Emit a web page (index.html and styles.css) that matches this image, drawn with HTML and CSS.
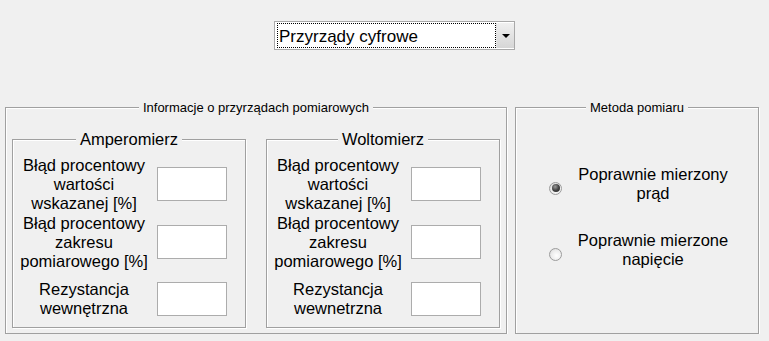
FILE: index.html
```html
<!DOCTYPE html>
<html lang="pl">
<head>
<meta charset="utf-8">
<title>Przyrządy cyfrowe</title>
<link rel="stylesheet" href="styles.css">
</head>
<body>
<div class="page">
  <div class="top">
    <div class="select">
      <div class="sel-value">Przyrządy cyfrowe</div>
      <div class="sel-btn"><span class="arrow"></span></div>
    </div>
  </div>
  <div class="panels">
    <div class="group outer">
      <div class="legend small">Informacje o przyrządach pomiarowych</div>
      <div class="meters">
        <div class="group meter">
          <div class="legend big">Amperomierz</div>
          <div class="rows">
            <div class="row"><div class="label">Błąd procentowy<br>wartości<br>wskazanej [%]</div><div class="edit"></div></div>
            <div class="row"><div class="label">Błąd procentowy<br>zakresu<br>pomiarowego [%]</div><div class="edit"></div></div>
            <div class="row"><div class="label">Rezystancja<br>wewnętrzna</div><div class="edit"></div></div>
          </div>
        </div>
        <div class="group meter">
          <div class="legend big">Woltomierz</div>
          <div class="rows">
            <div class="row"><div class="label">Błąd procentowy<br>wartości<br>wskazanej [%]</div><div class="edit"></div></div>
            <div class="row"><div class="label">Błąd procentowy<br>zakresu<br>pomiarowego [%]</div><div class="edit"></div></div>
            <div class="row"><div class="label">Rezystancja<br>wewnetrzna</div><div class="edit"></div></div>
          </div>
        </div>
      </div>
    </div>
    <div class="group method">
      <div class="legend small">Metoda pomiaru</div>
      <div class="radios">
        <div class="radio-row"><span class="radio on"></span><div class="radio-label">Poprawnie mierzony<br>prąd</div></div>
        <div class="radio-row"><span class="radio"></span><div class="radio-label">Poprawnie mierzone<br>napięcie</div></div>
      </div>
    </div>
  </div>
</div>
</body>
</html>
```
FILE: styles.css
```css
* { box-sizing: border-box; }
body {
  margin: 0;
  background: #f0f0f0;
  font-family: "Liberation Sans", Arial, sans-serif;
  color: #000;
}
.page { padding-top: 21px; }
.top { display: flex; padding-left: 274px; }
.select {
  display: flex;
  width: 241px;
  height: 29px;
  border: 1px solid #a9a9a9;
  background: #fff;
  padding: 1px 0 1px 2px;
}
.sel-value {
  flex: 1;
  border: 1px dotted #000;
  font-size: 17px;
  line-height: 20px;
  padding: 3px 0 0 1px;
}
.sel-btn {
  width: 18px;
  background: linear-gradient(#f0f0f0, #d6d6d6);
  border-left: 1px solid #e4e4e4;
  display: flex;
  align-items: center;
  justify-content: center;
}
.arrow {
  width: 0;
  height: 0;
  border-left: 4px solid transparent;
  border-right: 4px solid transparent;
  border-top: 4px solid #000;
  margin-left: 1px;
}
.panels {
  display: flex;
  gap: 8px;
  padding-left: 5px;
  margin-top: 57px;
}
.group {
  border: 1px solid #a0a0a0;
  box-shadow: 1px 1px 0 #fff, inset 1px 1px 0 #fff;
}
.legend {
  width: fit-content;
  margin-left: auto;
  margin-right: auto;
  background: #f0f0f0;
  padding: 0 4px;
  white-space: nowrap;
}
.legend.small { font-size: 13px; line-height: 15px; margin-top: -8px; }
.legend.big { font-size: 16.5px; line-height: 19px; margin-top: -10px; }
.outer { width: 502px; padding-bottom: 5px; }
.meters {
  display: flex;
  gap: 20px;
  padding: 0 6px;
  margin-top: 24px;
}
.meter { width: 234px; }
.rows {
  display: grid;
  grid-template-rows: 58px 58px 56px;
  margin-top: 6px;
}
.row { display: flex; align-items: center; }
.label {
  width: 142px;
  text-align: center;
  font-size: 16.5px;
  line-height: 19px;
  white-space: nowrap;
}
.edit {
  width: 70px;
  height: 34px;
  margin-left: 2px;
  background: #fff;
  border: 1px solid #acacac;
}
.method { width: 244px; }
.radios {
  display: flex;
  flex-direction: column;
  gap: 28px;
  padding-left: 33px;
  margin-top: 50px;
}
.radio-row { display: flex; align-items: center; }
.radio {
  width: 13px;
  height: 13px;
  border-radius: 50%;
  border: 1px solid #9c9c9c;
  background: radial-gradient(circle at 60% 60%, #ffffff 0, #ececec 55%, #d2d2d2 100%);
  display: flex;
  align-items: center;
  justify-content: center;
  margin-top: 8px;
  flex: none;
}
.radio.on::after {
  content: "";
  width: 8px;
  height: 8px;
  border-radius: 50%;
  background: radial-gradient(circle at 40% 35%, #9a9a9a 0, #444 50%, #1e1e1e 100%);
}
.radio-label {
  width: 160px;
  margin-left: 11px;
  text-align: center;
  font-size: 16.5px;
  line-height: 19px;
  white-space: nowrap;
}
```
